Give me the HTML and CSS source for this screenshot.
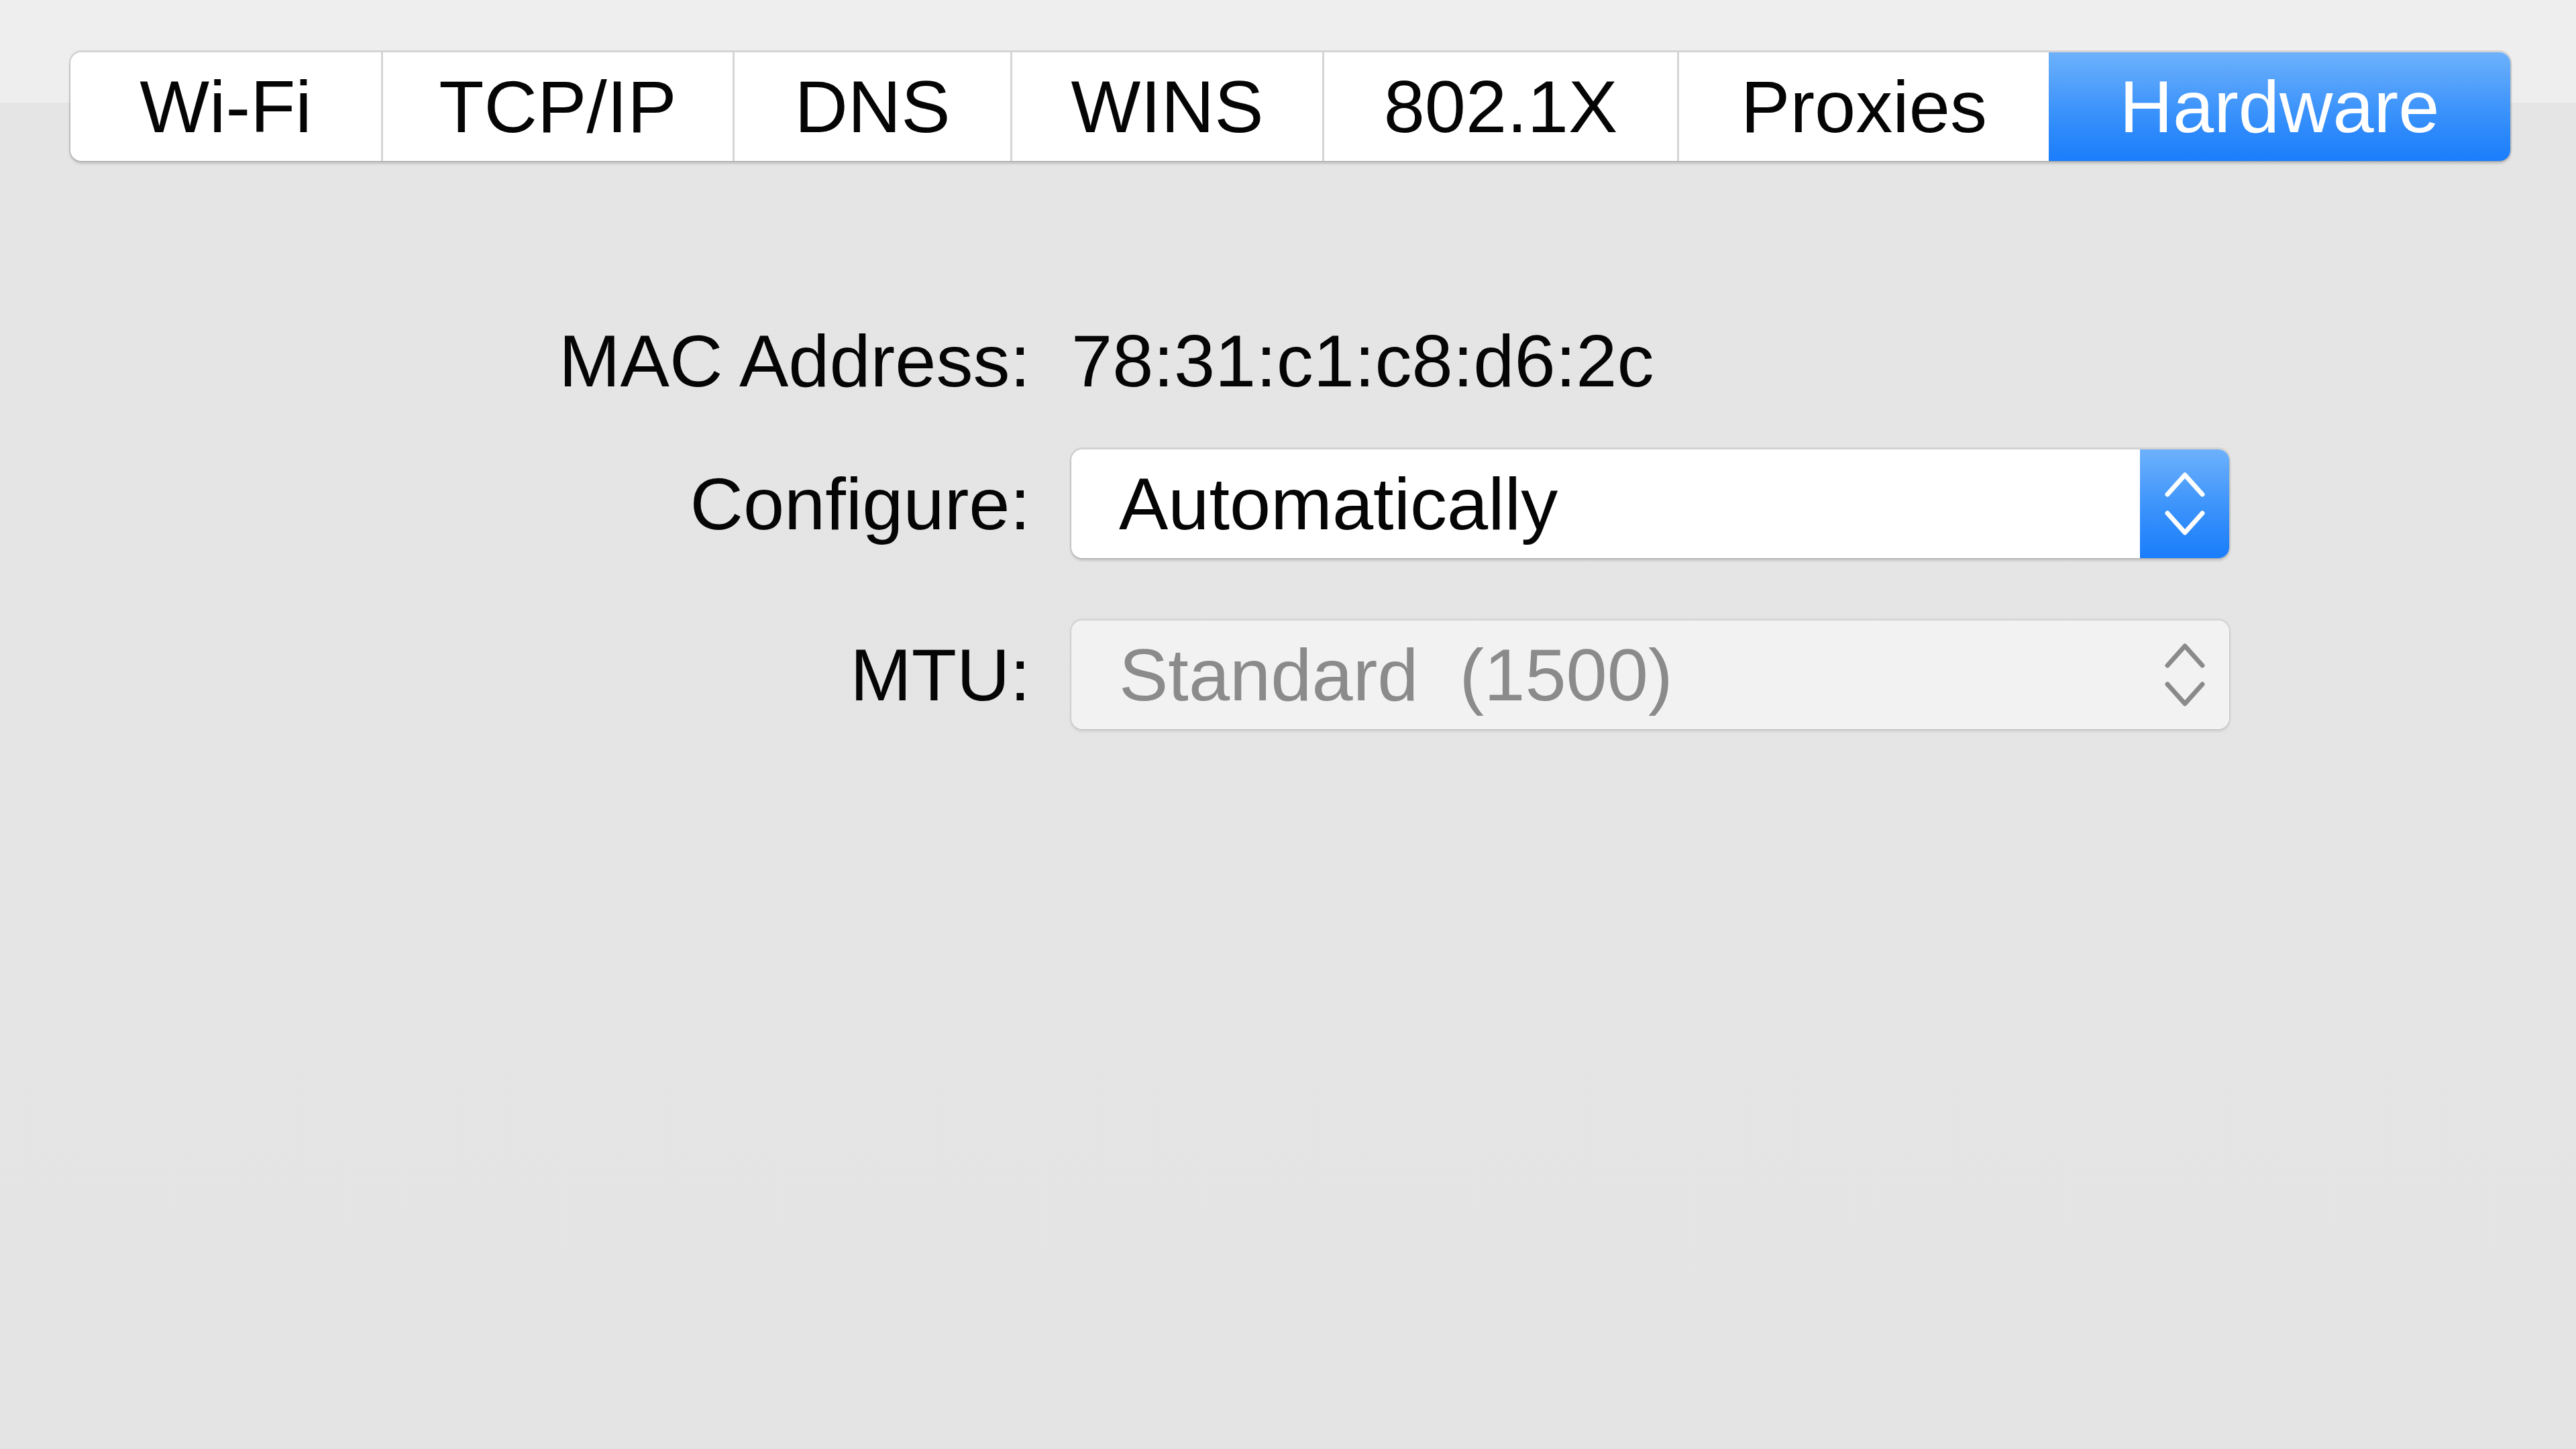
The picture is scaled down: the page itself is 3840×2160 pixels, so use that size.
FILE: index.html
```html
<!DOCTYPE html>
<html lang="en">
<head>
<meta charset="utf-8">
<title>Network — Hardware</title>
<link rel="stylesheet" href="styles.css">
</head>
<body>
<div class="window">
  <nav class="tabs">
    <div class="tab">Wi-Fi</div>
    <div class="tab">TCP/IP</div>
    <div class="tab">DNS</div>
    <div class="tab">WINS</div>
    <div class="tab">802.1X</div>
    <div class="tab">Proxies</div>
    <div class="tab tab-active">Hardware</div>
  </nav>

  <div class="form">
    <div class="row row-mac">
      <span class="label">MAC Address:</span>
      <span class="value">78:31:c1:c8:d6:2c</span>
    </div>
    <div class="row row-configure">
      <span class="label">Configure:</span>
      <div class="popup">
        <span class="popup-text">Automatically</span>
        <span class="stepper">
          <svg class="chev" viewBox="0 0 64 100" aria-hidden="true">
            <polyline points="6,36 32,7 58,36"/>
            <polyline points="6,64 32,93 58,64"/>
          </svg>
        </span>
      </div>
    </div>
    <div class="row row-mtu">
      <span class="label">MTU:</span>
      <div class="popup popup-disabled">
        <span class="popup-text">Standard&nbsp; (1500)</span>
        <span class="stepper">
          <svg class="chev" viewBox="0 0 64 100" aria-hidden="true">
            <polyline points="6,36 32,7 58,36"/>
            <polyline points="6,64 32,93 58,64"/>
          </svg>
        </span>
      </div>
    </div>
  </div>
</div>
</body>
</html>
```

FILE: styles.css
```css
html, body {
  margin: 0;
  padding: 0;
}

body {
  width: 3840px;
  height: 2160px;
  overflow: hidden;
  background: linear-gradient(to bottom, #eeeeee 0, #eeeeee 153px, #e5e5e5 153px, #e4e4e4 100%);
  font-family: "Liberation Sans", Arial, Helvetica, sans-serif;
  font-size: 110px;
  color: #050505;
}

.window {
  display: flex;
  flex-direction: column;
}

/* ---------- Segmented tab bar ---------- */
.tabs {
  margin: 78px 0 0 105px;
  width: 3637px;
  height: 162px;
  display: grid;
  grid-template-columns: 463px 524px 414px 465px 529px 554px 688px;
  background: #ffffff;
  border-radius: 16px;
  overflow: hidden;
  box-shadow: 0 -1px 0 2px rgba(0, 0, 0, 0.1), 0 3px 4px rgba(0, 0, 0, 0.22);
}

.tab {
  display: flex;
  align-items: center;
  justify-content: center;
  line-height: 1;
  color: #050505;
  white-space: nowrap;
  border-left: 3px solid #d6d6d6;
}

.tab:first-child {
  border-left: none;
}

.tab-active {
  border-left: none;
  color: #ffffff;
  background: linear-gradient(to bottom, #6db1fc 0%, #3a92fb 55%, #1a7dfb 100%);
}

/* ---------- Form ---------- */
.form {
  margin-top: 217px;
  display: flex;
  flex-direction: column;
}

.row {
  display: grid;
  grid-template-columns: 1536px 1726px;
  column-gap: 61px;
  align-items: center;
  height: 162px;
  line-height: 1;
}

.row-configure {
  margin-top: 51px;
}

.row-mtu {
  margin-top: 93px;
}

.label {
  text-align: right;
  white-space: nowrap;
}

.value {
  white-space: nowrap;
}

/* ---------- Pop-up buttons ---------- */
.popup {
  box-sizing: border-box;
  height: 162px;
  display: flex;
  align-items: center;
  background: #ffffff;
  border-radius: 16px;
  overflow: hidden;
  box-shadow: 0 -1px 0 2px rgba(0, 0, 0, 0.08), 0 3px 4px rgba(0, 0, 0, 0.2);
}

.popup-text {
  padding-left: 71px;
  white-space: nowrap;
}

.stepper {
  margin-left: auto;
  width: 133px;
  align-self: stretch;
  display: flex;
  align-items: center;
  justify-content: center;
  background: linear-gradient(to bottom, #6db1fc 0%, #3a92fb 55%, #1a7dfb 100%);
}

.chev {
  width: 64px;
  height: 100px;
  fill: none;
  stroke: #ffffff;
  stroke-width: 7;
  stroke-linecap: round;
  stroke-linejoin: round;
}

.popup-disabled {
  background: #f2f2f2;
  box-shadow: 0 -1px 0 2px rgba(0, 0, 0, 0.06), 0 3px 4px rgba(0, 0, 0, 0.12);
}

.popup-disabled .popup-text {
  color: #8b8b8b;
}

.popup-disabled .stepper {
  background: none;
}

.popup-disabled .chev {
  stroke: #8a8a8a;
}
```
